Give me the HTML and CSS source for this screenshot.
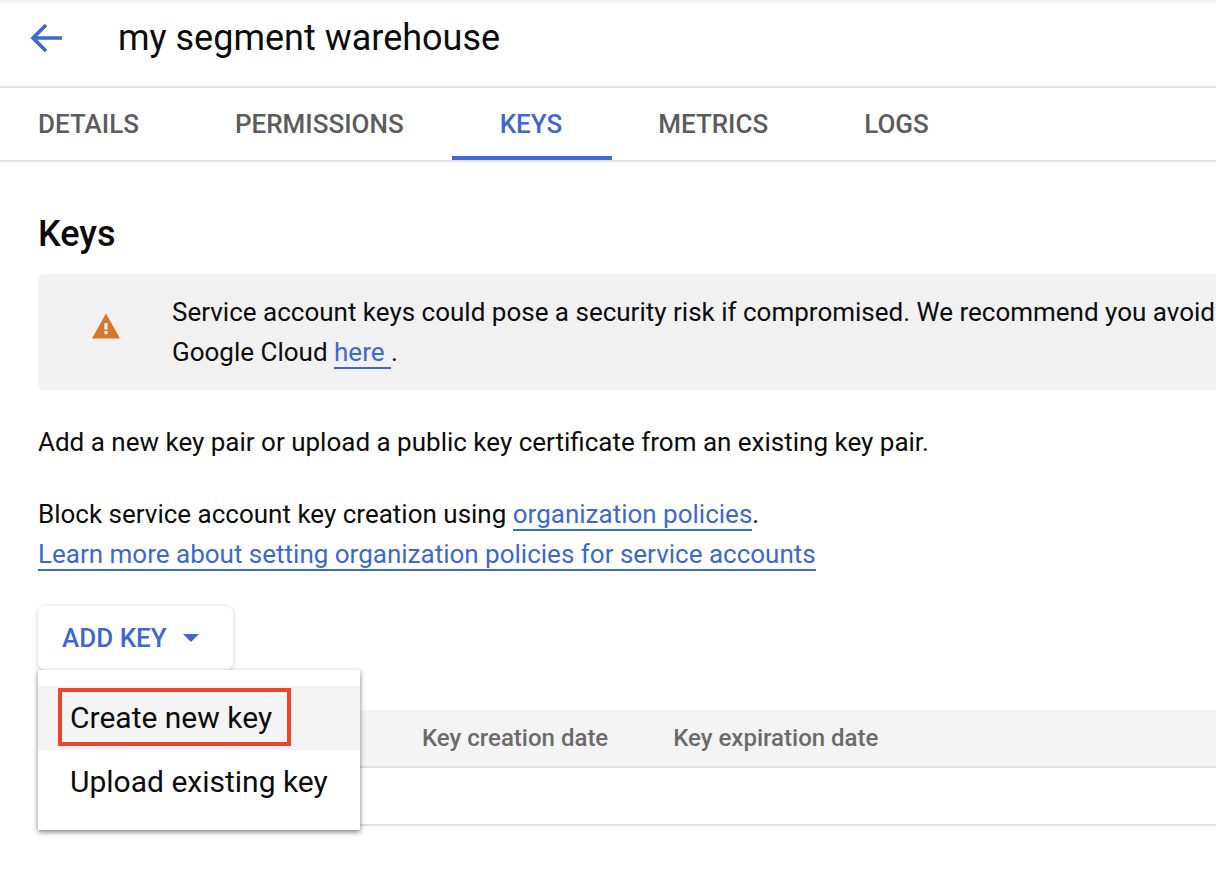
FILE: index.html
```html
<!DOCTYPE html>
<html>
<head>
  <title>my segment warehouse</title>
  <link rel="stylesheet" href="styles.css">
</head>
<body>
  <div class="header">
    <svg class="back-icon" viewBox="0 0 34 32">
      <path d="M33 16H4M17 3L4 16L17 29"/>
    </svg>
    <h1>my segment warehouse</h1>
  </div>

  <div class="tabs">
    <div class="tab">DETAILS</div>
    <div class="tab">PERMISSIONS</div>
    <div class="tab active">KEYS</div>
    <div class="tab">METRICS</div>
    <div class="tab">LOGS</div>
  </div>

  <div class="content">
    <h2>Keys</h2>

    <div class="notice">
      <svg class="warn-icon" viewBox="0 0 28 26">
        <path d="M14 0.5L28 25.5H0Z"/>
        <rect class="warn-mark" x="12.4" y="10" width="3.2" height="6.5"/>
        <rect class="warn-mark" x="12.4" y="18" width="3.2" height="3.2"/>
      </svg>
      <div class="notice-text">
        <div>Service account keys could pose a security risk if compromised. We recommend you avoid</div>
        <div>Google Cloud <a href="#">here </a>.</div>
      </div>
    </div>

    <p class="intro">Add a new key pair or upload a public key certificate from an existing key pair.</p>

    <p class="policy">
      Block service account key creation using <a href="#">organization policies</a>.<br>
      <a href="#">Learn more about setting organization policies for service accounts</a>
    </p>

    <div class="add-key">
      <button class="add-key-btn">
        ADD KEY
        <svg class="caret" viewBox="0 0 16 8"><path d="M0 0H16L8 8Z"/></svg>
      </button>
      <div class="menu">
        <div class="menu-item hover">Create new key</div>
        <div class="menu-item">Upload existing key</div>
        <div class="highlight"></div>
      </div>
    </div>

    <div class="table">
      <div class="table-head">
        <span class="col-created">Key creation date</span>
        <span class="col-expires">Key expiration date</span>
      </div>
      <div class="table-row"></div>
    </div>
  </div>
</body>
</html>
```

FILE: styles.css
```css
:root {
  --blue: #3f67d1;
  --border: #e0e0e0;
  --tab-text: #5c5c5c;
}

html, body {
  height: 100%;
}

body {
  margin: 0;
  overflow: hidden;
  font-family: Roboto, sans-serif;
  color: #0c0c0c;
  background: #fff;
}

a {
  color: var(--blue);
  text-decoration: none;
  border-bottom: 2px solid var(--blue);
}

.header {
  display: flex;
  align-items: center;
  height: 76px;
  padding: 0 0 10px 29px;
  border-bottom: 2px solid var(--border);
  box-shadow: inset 0 4px 3px -2px #f0f0f0;
}

.back-icon {
  width: 34px;
  height: 32px;
  fill: none;
  stroke: var(--blue);
  stroke-width: 3.6;
}

.header h1 {
  margin: 0 0 0 55px;
  font-size: 36px;
  font-weight: 400;
  white-space: nowrap;
}

.tabs {
  display: flex;
  height: 72px;
  padding-left: 38px;
  border-bottom: 2px solid var(--border);
}

.tab {
  display: flex;
  align-items: center;
  margin-right: 96px;
  font-size: 26px;
  font-weight: 500;
  color: var(--tab-text);
}

.tab.active {
  box-sizing: border-box;
  height: 72px;
  margin: 0 46px 0 -48px;
  padding: 4px 50px 0 48px;
  color: var(--blue);
  border-bottom: 4px solid var(--blue);
}

.content {
  padding-left: 38px;
}

.content h2 {
  margin: 50px 0 18px;
  font-size: 36px;
  line-height: 44px;
  font-weight: 500;
}

.notice {
  display: flex;
  align-items: center;
  height: 116px;
  padding-left: 54px;
  background: #f1f1f1;
  border-radius: 6px 0 0 6px;
  font-size: 26px;
  line-height: 40px;
  white-space: nowrap;
  overflow: hidden;
}

.warn-icon {
  flex: none;
  width: 28px;
  height: 26px;
  margin: 0 52px 12px 0;
  fill: #d6772b;
}

.warn-mark {
  fill: #f1f1f1;
}

.intro {
  margin: 32px 0 0;
  font-size: 26px;
  line-height: 40px;
}

.policy {
  margin: 32px 0 0;
  font-size: 26px;
  line-height: 40px;
}

.add-key {
  position: relative;
  width: 195px;
  margin-top: 32px;
}

.add-key-btn {
  display: flex;
  align-items: center;
  gap: 16px;
  width: 195px;
  height: 64px;
  padding: 0 0 0 24px;
  border: none;
  border-radius: 8px;
  background: #fff;
  box-shadow: 0 1px 5px rgba(0, 0, 0, 0.2);
  font-family: inherit;
  font-size: 26px;
  font-weight: 500;
  color: var(--blue);
}

.caret {
  width: 16px;
  height: 8px;
  fill: var(--blue);
}

.menu {
  position: absolute;
  top: 64px;
  left: 0;
  z-index: 2;
  width: 322px;
  padding: 16px 0;
  background: #fff;
  box-shadow: 0 2px 5px rgba(0, 0, 0, 0.5);
}

.menu-item {
  height: 64px;
  padding-left: 32px;
  font-size: 30px;
  line-height: 64px;
}

.menu-item.hover {
  background: #f4f4f4;
}

.highlight {
  position: absolute;
  top: 18px;
  left: 20px;
  width: 233px;
  height: 58px;
  box-sizing: border-box;
  border: 4px solid #e8472b;
}

.table {
  margin-top: 40px;
}

.table-head {
  display: flex;
  align-items: center;
  height: 56px;
  background: #f4f4f4;
  border-bottom: 2px solid var(--border);
  font-size: 24px;
  font-weight: 500;
  color: #6b6b6b;
}

.col-created {
  margin-left: 384px;
}

.col-expires {
  margin-left: 65px;
}

.table-row {
  height: 56px;
  border-bottom: 2px solid var(--border);
}
```
